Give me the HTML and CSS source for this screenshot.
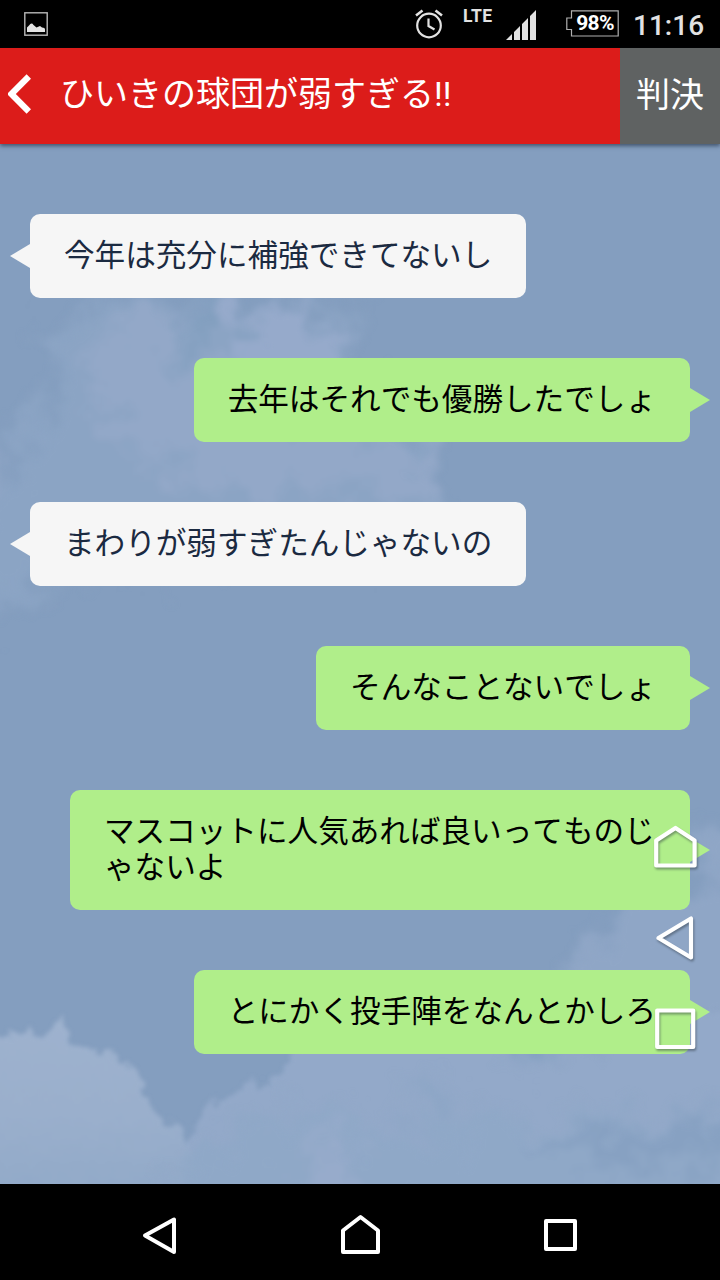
FILE: index.html
```html
<!DOCTYPE html>
<html lang="ja">
<head>
<meta charset="utf-8">
<title>ひいきの球団が弱すぎる!!</title>
<link rel="stylesheet" href="styles.css">
</head>
<body>
<div class="phone">
  <div class="status">
    <svg class="status-picture" viewBox="0 0 24 24"><rect x=".8" y=".8" width="22.400" height="22.400" fill="none" stroke="#b8b8b8" stroke-width="1.400"/><path d="M3 20V15.500L5 13.500Q7.500 10 9.500 13L12.500 15.500L16 14L18 15.500Q21 15.500 21 17.500V20Z" fill="#e4e4e4"/></svg>
    <svg class="status-alarm" viewBox="0 0 28 30"><g fill="none" stroke="#e2e2e2" stroke-width="2.200"><circle cx="14" cy="16.500" r="11.800"/><path d="M13.500 9.500V17L19.500 20.500"/><path d="M1 6.500L7.500 1.500M20.500 1.500L27 6.500" stroke-width="2.600"/></g></svg>
    <span class="status-network">LTE</span>
    <svg class="status-signal" viewBox="0 0 30 30"><path d="M0 30L6 24V30ZM8 30V22L14 16V30ZM16 30V14L22 8V30ZM24 30V6L30 0V30Z" fill="#e2e2e2"/></svg>
    <div class="battery">
      <svg class="battery-frame" viewBox="0 0 53 27"><path d="M5.500 .8H52.200V26H5.500V19.500H.8V8H5.500Z" fill="none" stroke="#b0b0b0" stroke-width="1.200"/></svg>
      <span class="battery-text">98%</span>
    </div>
    <span class="status-time">11:16</span>
  </div>

  <header class="header">
    <svg class="back" viewBox="0 0 24 40"><path d="M20.800 2.500L3.400 20L20.800 37.500" fill="none" stroke="#fff" stroke-width="6.200"/></svg>
    <h1 class="title">ひいきの球団が弱すぎる!!</h1>
    <button class="judge" type="button">判決</button>
  </header>

  <main class="chat">
    <svg class="sky" viewBox="0 0 720 1040">
      <defs>
        <filter id="puff" x="-20%" y="-20%" width="140%" height="140%" color-interpolation-filters="sRGB">
          <feGaussianBlur in="SourceGraphic" stdDeviation="9" result="soft"/>
          <feTurbulence type="fractalNoise" baseFrequency="0.025" numOctaves="5" seed="7" result="n"/>
          <feDisplacementMap in="soft" in2="n" scale="90" xChannelSelector="R" yChannelSelector="G"/>
          <feGaussianBlur stdDeviation="2"/>
        </filter>
        <filter id="edge" x="-10%" y="-10%" width="120%" height="120%" color-interpolation-filters="sRGB">
          <feTurbulence type="fractalNoise" baseFrequency="0.07" numOctaves="5" seed="3" result="n"/>
          <feDisplacementMap in="SourceGraphic" in2="n" scale="24" xChannelSelector="R" yChannelSelector="G"/>
          <feGaussianBlur stdDeviation="2"/>
        </filter>
        <linearGradient id="fade" x1="0" y1="0" x2="0" y2="1">
          <stop offset="0" stop-color="#9eb2ce"/><stop offset=".5" stop-color="#9aafcc"/><stop offset="1" stop-color="#8fa8c7"/>
        </linearGradient>
      </defs>
      <g filter="url(#puff)">
        <path d="M-40 380L20 330L25 280L55 230L40 200L90 155L200 155L230 160L350 165L350 210L400 260L430 300L450 370L400 400L200 405L60 430L-40 480Z" fill="#8ba4c4"/>
        <path d="M100 185L165 165L180 215L220 240L330 290L430 300L450 360L330 350L220 345L120 300L90 240Z" fill="#93a8c8"/>
        <path d="M240 165L310 170L345 210L340 250L240 240L225 200Z" fill="#96aacb"/>
        <path d="M185 165L228 160L225 205L192 200Z" fill="#829fbf"/>
        <path d="M-40 290L5 300L-5 350L-40 370Z" fill="#93a8c8"/>
        <path d="M595 790L625 765L690 745L710 700L770 660V900H570L580 830Z" fill="#8fa6c6"/>
      </g>
      <g filter="url(#edge)">
        <path d="M180 1070L186 1000L215 955L240 942L270 943L295 905L330 895L370 875L520 870L760 870V1070Z" fill="#93a9c9"/>
        <path d="M-30 880L10 890L30 883L42 895L62 870L68 900L120 914L144 940L150 962L180 985L215 1070H-30Z" fill="url(#fade)"/>
      </g>
      <g filter="url(#puff)">
        <path d="M200 1000L290 970L420 990L760 960V1080H160Z" fill="#8fa8c7"/>
        <path d="M500 880L620 870L590 905L515 915Z" fill="#84a0c1"/>
        <path d="M410 950L450 935L480 970L430 985Z" fill="#8aa5c5" opacity=".6"/>
        <path d="M520 1000L620 985L740 965V1015L600 1025Z" fill="#87a1c2"/>
        <path d="M290 1010L350 990L370 1050H300Z" fill="#97abcb"/>
      </g>
    </svg>

    <p class="bubble theirs">今年は充分に補強できてないし</p>
    <p class="bubble mine">去年はそれでも優勝したでしょ</p>
    <p class="bubble theirs">まわりが弱すぎたんじゃないの</p>
    <p class="bubble mine">そんなことないでしょ</p>
    <p class="bubble mine long">マスコットに人気あれば良いってものじゃないよ</p>
    <p class="bubble mine">とにかく投手陣をなんとかしろ</p>
  </main>

  <div class="floating">
    <svg class="float-icon" viewBox="0 0 48 48"><path d="M4.200 16.500L23.500 4L42.600 16.500V41.500H4.200Z"/></svg>
    <svg class="float-icon" viewBox="0 0 48 48"><path d="M39 4.500V43.500L6.500 24Z"/></svg>
    <svg class="float-icon" viewBox="0 0 48 48"><path d="M5.200 6.500H41.200V43H5.200Z"/></svg>
  </div>

  <nav class="nav">
    <svg class="nav-icon" viewBox="0 0 48 48"><path d="M38 11.500V44L9 27.500Z"/></svg>
    <svg class="nav-icon" viewBox="0 0 48 48"><path d="M7 22.500L24.500 9L42 22.500V44H7Z"/></svg>
    <svg class="nav-icon" viewBox="0 0 48 48"><path d="M10 13H39V41H10Z"/></svg>
  </nav>
</div>
</body>
</html>
```
FILE: styles.css
```css
* { box-sizing: border-box; }
body {
  margin: 0;
  font-family: Roboto, "Noto Sans CJK JP", sans-serif;
}
svg { display: block; }
.phone {
  position: relative;
  display: flex;
  flex-direction: column;
  width: 720px;
  height: 1280px;
  overflow: hidden;
  background: #000;
}

/* Status bar */
.status {
  display: flex;
  align-items: flex-start;
  height: 48px;
  padding-left: 24px;
  color: #e2e2e2;
  white-space: nowrap;
}
.status-picture { width: 24px; height: 24px; margin-top: 12px; }
.status-alarm { width: 28px; height: 30px; margin: 9px 20px 0 367px; }
.status-network {
  width: 43px;
  margin-top: 6px;
  font-size: 17.5px;
  font-weight: 700;
  line-height: 20px;
  letter-spacing: .4px;
}
.status-signal { width: 30px; height: 30px; margin-top: 10px; }
.battery {
  display: grid;
  width: 53px;
  height: 27px;
  margin: 10px 14px 0 30px;
}
.battery-frame, .battery-text { grid-area: 1 / 1; }
.battery-frame { width: 53px; height: 27px; }
.battery-text {
  padding-left: 5px;
  text-align: center;
  font-size: 21px;
  font-weight: 700;
  line-height: 27px;
  letter-spacing: -.7px;
  color: #fff;
}
.status-time {
  margin-top: 10px;
  font-size: 28px;
  font-weight: 500;
  line-height: 32px;
}

/* Title bar */
.header {
  position: relative;
  z-index: 1;
  display: flex;
  align-items: center;
  flex: none;
  height: 96px;
  background: #dc1c1a;
  color: #fff;
  box-shadow: 0 2px 4px rgba(20, 35, 55, .6);
}
.back { width: 24px; height: 40px; margin: 0 28px 5px 8px; }
.title {
  flex: 1;
  margin: 0;
  font-size: 34px;
  font-weight: 400;
  line-height: 48px;
  padding-bottom: 4px;
  white-space: nowrap;
}
.judge {
  width: 100px;
  height: 96px;
  padding: 0 0 8px;
  border: 0;
  background: #5f6262;
  color: #fff;
  font: inherit;
  font-size: 34px;
}

/* Conversation */
.chat {
  position: relative;
  display: flex;
  flex-direction: column;
  align-items: flex-start;
  gap: 60px;
  height: 1040px;
  padding: 70px 30px 0;
  background: #849ebf;
}
.sky {
  position: absolute;
  inset: 0;
  width: 720px;
  height: 1040px;
}
.bubble {
  position: relative;
  margin: 0;
  padding: 21px 34px 27px;
  border-radius: 10px;
  font-family: "Noto Sans CJK JP", sans-serif;
  font-size: 30.6px;
  font-kerning: none;
  line-height: 36px;
}
.bubble::after {
  content: "";
  position: absolute;
  top: 50%;
  margin-top: -12px;
  border: solid transparent;
}
.theirs { background: #f6f6f6; color: #1b2a41; }
.theirs::after {
  left: -20px;
  border-width: 12px 20px 12px 0;
  border-right-color: #f6f6f6;
}
.mine { align-self: flex-end; background: #b0ee8a; color: #000; }
.mine::after {
  right: -20px;
  border-width: 12px 0 12px 20px;
  border-left-color: #b0ee8a;
}
.long { width: 620px; }

/* Floating shortcuts over the conversation */
.floating {
  position: absolute;
  top: 824px;
  right: 20px;
  z-index: 2;
  display: grid;
  grid-template-rows: 48px 48px 48px;
  gap: 42px;
}
.float-icon {
  width: 48px;
  height: 48px;
  fill: none;
  stroke: #fff;
  stroke-width: 4.2;
  stroke-linejoin: round;
  filter: drop-shadow(1px 2px 1px rgba(40, 50, 60, .45));
}

/* System navigation */
.nav {
  display: grid;
  grid-template-columns: repeat(3, 200px);
  place-items: center;
  flex: none;
  height: 96px;
  margin-top: auto;
  padding: 0 60px;
  background: #000;
}
.nav-icon {
  width: 48px;
  height: 48px;
  fill: none;
  stroke: #fff;
  stroke-width: 4;
  stroke-linejoin: round;
}
```
